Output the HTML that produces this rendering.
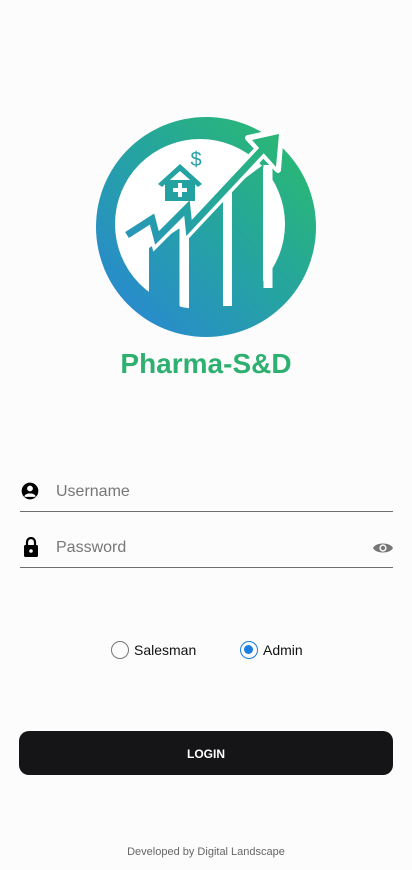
<!DOCTYPE html>
<html><head><meta charset="utf-8"><style>
body{margin:0;width:412px;height:870px;background:#fdfcfd;font-family:"Liberation Sans",sans-serif;position:relative;overflow:hidden}
.t{position:absolute;left:0;width:412px;text-align:center}
.field{position:absolute;left:20px;width:373px;border-bottom:1px solid #6f6f6f;height:40px}
.ph{position:absolute;left:36px;top:12px;font-size:16px;color:#777}
.btn{position:absolute;left:19px;top:731px;width:374px;height:44px;background:#151416;border-radius:10px;color:#fff;font-weight:bold;font-size:12px;text-align:center;line-height:46px}
</style></head><body>
<svg width="412" height="400" style="position:absolute;left:0;top:0">
<defs><linearGradient id="g" gradientUnits="userSpaceOnUse" x1="110" y1="330" x2="310" y2="130"><stop offset="0" stop-color="#2a86d6"/><stop offset="0.5" stop-color="#25a3a2"/><stop offset="1" stop-color="#2bbb6c"/></linearGradient></defs>
<circle cx="206" cy="227" r="110" fill="url(#g)"/>
<circle cx="200" cy="224" r="85" fill="#fff"/>
<g fill="url(#g)">
<polygon points="149,248 180,228 180,310 149,310"/>
<polygon points="189,222 223,195 223,312 189,312"/>
<polygon points="232,188 263,165 263,310 232,310"/>
</g>
<g stroke="#fff" stroke-width="9" fill="none">
<line x1="184" y1="225" x2="184" y2="306"/><line x1="227.5" y1="195" x2="227.5" y2="306"/>
<line x1="268" y1="165" x2="268" y2="288"/>
</g>
<polyline points="127,235 152,219 157,238 187,208 189,228 262,150" stroke="#fff" stroke-width="14" fill="none" stroke-linejoin="miter"/>
<polygon points="248,138 281,131 278,170" fill="#fff" stroke="#fff" stroke-width="6" stroke-linejoin="round"/>
<polyline points="127,235 152,219 157,238 187,208 189,228 262,150" stroke="url(#g)" stroke-width="7" fill="none"/>
<polygon points="252,140 279,134 276,167" fill="url(#g)"/>
<g fill="#24a2a2"><polygon points="158,184 180,164 202,184 198,187 180,171 162,187"/>
<rect x="165" y="180" width="30" height="21"/></g>
<path d="M180 183v14M173 190h14" stroke="#fff" stroke-width="4"/>
<text x="196" y="166" font-size="20" font-family="Liberation Sans" fill="#25a0a5" text-anchor="middle">$</text>
<text x="206" y="373" font-size="28" font-weight="bold" fill="#2db070" text-anchor="middle">Pharma-S&amp;D</text>
</svg>
<div class="field" style="top:471px">
<svg width="20" height="20" style="position:absolute;left:0;top:10px" viewBox="0 0 24 24"><circle cx="12" cy="12" r="10" fill="#000"/><circle cx="12" cy="9" r="3.5" fill="#fff"/><path d="M5.5 17.5c3-3.5 10-3.5 13 0v1.5h-13z" fill="#fff"/></svg>
<span class="ph">Username</span></div>
<div class="field" style="top:527px">
<svg width="16" height="20" style="position:absolute;left:3px;top:10px" viewBox="0 0 16 20"><path d="M4 8V5a4 4 0 0 1 8 0v3" stroke="#000" stroke-width="2.2" fill="none"/><rect x="1" y="8" width="14" height="12" rx="1.5" fill="#000"/><circle cx="8" cy="14" r="1.8" fill="#fff"/></svg>
<span class="ph">Password</span>
<svg width="20" height="14" style="position:absolute;right:0;top:14px" viewBox="0 0 20 14"><path d="M0 7C3 1 17 1 20 7 17 13 3 13 0 7z" fill="#777"/><circle cx="10" cy="7" r="3.6" fill="#fff"/><circle cx="10" cy="7" r="2.2" fill="#777"/></svg>
</div>
<div style="position:absolute;left:111px;top:641px;width:18px;height:18px;border:1px solid #777;border-radius:50%;box-sizing:border-box"></div>
<div style="position:absolute;left:134px;top:642px;font-size:14px;color:#111">Salesman</div>
<div style="position:absolute;left:240px;top:641px;width:18px;height:18px;border:1.5px solid #1a7fe0;border-radius:50%;box-sizing:border-box"><div style="margin:3px;width:9px;height:9px;border-radius:50%;background:#1a7fe0"></div></div>
<div style="position:absolute;left:263px;top:642px;font-size:14px;color:#111">Admin</div>
<div class="btn">LOGIN</div>
<div class="t" style="top:846px;font-size:11px;color:#666">Developed by Digital Landscape</div>
</body></html>
